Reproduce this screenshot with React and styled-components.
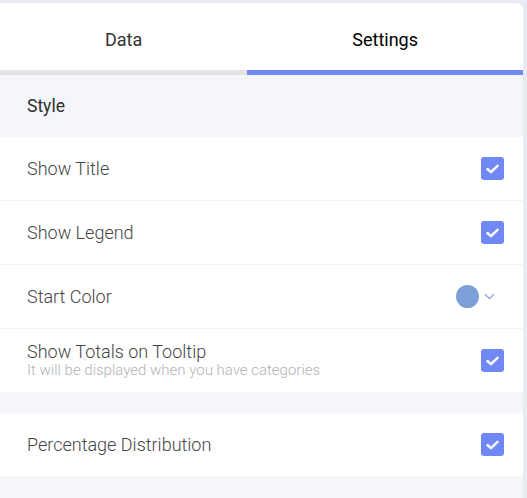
import React from "react";
import styled, { createGlobalStyle } from "styled-components";

const GlobalStyle = createGlobalStyle`
  html, body {
    margin: 0;
    padding: 0;
    background: #e8ebf1;
    font-family: Roboto, "Liberation Sans", sans-serif;
  }
  * { box-sizing: border-box; }
`;

const Page = styled.div`
  padding: 3px 4px 0 0;
  min-height: 498px;
`;

const Panel = styled.div`
  background: #f5f6fa;
  border-top-right-radius: 7px;
  overflow: hidden;
  min-height: 495px;
`;

const Tabs = styled.div`
  display: flex;
  background: #fff;
`;

const Tab = styled.div`
  flex: 1 1 auto;
  height: 72px;
  padding-top: 5px;
  display: flex;
  align-items: center;
  justify-content: center;
  font-size: 18px;
  font-weight: 400;
  color: ${(p) => (p.active ? "#000" : "#333")};
  border-bottom: 5px solid ${(p) => (p.active ? "#7189f6" : "#e4e4e6")};
`;

const SectionHeader = styled.div`
  height: 62px;
  display: flex;
  align-items: center;
  padding-left: 27px;
  font-size: 17.5px;
  font-weight: 400;
  color: #2e2e2e;
`;

const Group = styled.div`
  background: #fff;
  margin-bottom: ${(p) => p.gap || 0}px;
`;

const Row = styled.div`
  height: ${(p) => (p.last ? 63 : 64)}px;
  display: flex;
  align-items: center;
  justify-content: space-between;
  padding: 0 19px 0 27px;
  border-bottom: ${(p) => (p.last ? "none" : "1px solid #f1f2f6")};
`;

const Label = styled.div`
  display: flex;
  flex-direction: column;
`;

const Title = styled.span`
  font-size: 18px;
  font-weight: 300;
  line-height: 20px;
  color: #444;
`;

const Hint = styled.span`
  font-size: 15px;
  font-weight: 300;
  line-height: 17px;
  color: #b3b3b6;
`;

const Check = styled.div`
  width: 23px;
  height: 23px;
  border-radius: 3px;
  background: #7088f5;
  display: flex;
  align-items: center;
  justify-content: center;
`;

const ColorPick = styled.div`
  display: flex;
  align-items: center;
  gap: 5px;
  padding-right: 9px;
`;

const Swatch = styled.div`
  width: 23px;
  height: 23px;
  border-radius: 50%;
  background: ${(p) => p.color};
`;

function Checkbox() {
  return (
    <Check>
      <svg width="13" height="10" viewBox="0 0 13 10">
        <path
          d="M1.5 5 L5 8.2 L11.5 1.8"
          fill="none"
          stroke="#fff"
          strokeWidth="2.4"
          strokeLinecap="round"
          strokeLinejoin="round"
        />
      </svg>
    </Check>
  );
}

export default function App() {
  return (
    <>
      <GlobalStyle />
      <Page>
        <Panel>
          <Tabs>
            <Tab>Data</Tab>
            <Tab active>Settings</Tab>
          </Tabs>
          <SectionHeader>Style</SectionHeader>
          <Group gap={21}>
            <Row>
              <Title>Show Title</Title>
              <Checkbox />
            </Row>
            <Row>
              <Title>Show Legend</Title>
              <Checkbox />
            </Row>
            <Row>
              <Title>Start Color</Title>
              <ColorPick>
                <Swatch color="#7b9fd6" />
                <svg width="11" height="7" viewBox="0 0 11 7">
                  <path
                    d="M1 1.2 L5.5 5.5 L10 1.2"
                    fill="none"
                    stroke="#8ea8dc"
                    strokeWidth="1.3"
                  />
                </svg>
              </ColorPick>
            </Row>
            <Row last>
              <Label>
                <Title>Show Totals on Tooltip</Title>
                <Hint>It will be displayed when you have categories</Hint>
              </Label>
              <Checkbox />
            </Row>
          </Group>
          <Group>
            <Row last>
              <Title>Percentage Distribution</Title>
              <Checkbox />
            </Row>
          </Group>
        </Panel>
      </Page>
    </>
  );
}
